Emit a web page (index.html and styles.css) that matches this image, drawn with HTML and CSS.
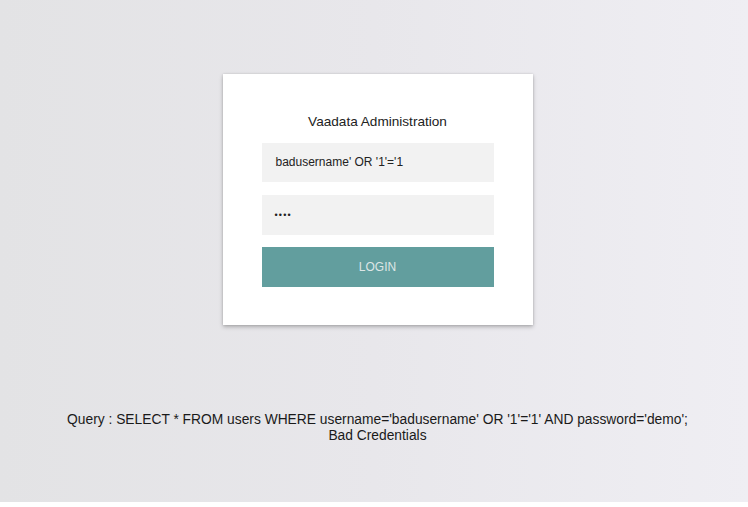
FILE: index.html
```html
<!DOCTYPE html>
<html>
<head>
<meta charset="utf-8">
<link rel="stylesheet" href="styles.css">
</head>
<body>
<div class="page">
  <div class="card">
    <div class="title">Vaadata Administration</div>
    <div class="field">badusername' OR '1'='1</div>
    <div class="field pw">••••</div>
    <div class="btn">LOGIN</div>
  </div>
  <div class="result">
    <div>Query : SELECT * FROM users WHERE username='badusername' OR '1'='1' AND password='demo';</div>
    <div>Bad Credentials</div>
  </div>
</div>
</body>
</html>
```
FILE: styles.css
```css
html, body {
  margin: 0;
  padding: 0;
  background: #ffffff;
}
body {
  font-family: "Liberation Sans", Arial, sans-serif;
  color: #222;
}
.page {
  height: 502px;
  background: linear-gradient(90deg, #e3e3e5 0%, #e8e7eb 50%, #efeef3 100%);
  padding-left: 7px;
  padding-top: 74px;
  box-sizing: border-box;
  display: flex;
  flex-direction: column;
  align-items: center;
}
.card {
  width: 310px;
  height: 251px;
  box-sizing: border-box;
  background: #fff;
  padding: 40px 39px 0;
  box-shadow: 0 2px 4px rgba(0,0,0,0.25), 0 0 2px rgba(0,0,0,0.12);
  display: flex;
  flex-direction: column;
}
.title {
  font-size: 13.6px;
  text-align: center;
  color: #222;
  height: 29px;
  line-height: 16px;
}
.field {
  height: 39px;
  flex: none;
  background: #f2f2f2;
  font-size: 12px;
  line-height: 39px;
  padding-left: 14px;
  color: #222;
  margin-bottom: 13px;
}
.field.pw {
  height: 40px;
  line-height: 40px;
  font-size: 9px;
  letter-spacing: 1.2px;
  padding-left: 13px;
  margin-bottom: 12px;
}
.btn {
  height: 40px;
  flex: none;
  background: #629e9e;
  color: #dde6e6;
  font-size: 12px;
  text-align: center;
  line-height: 40px;
}
.result {
  margin-top: 87px;
  font-size: 13.8px;
  line-height: 16px;
  text-align: center;
  color: #1a1a1a;
}
```
